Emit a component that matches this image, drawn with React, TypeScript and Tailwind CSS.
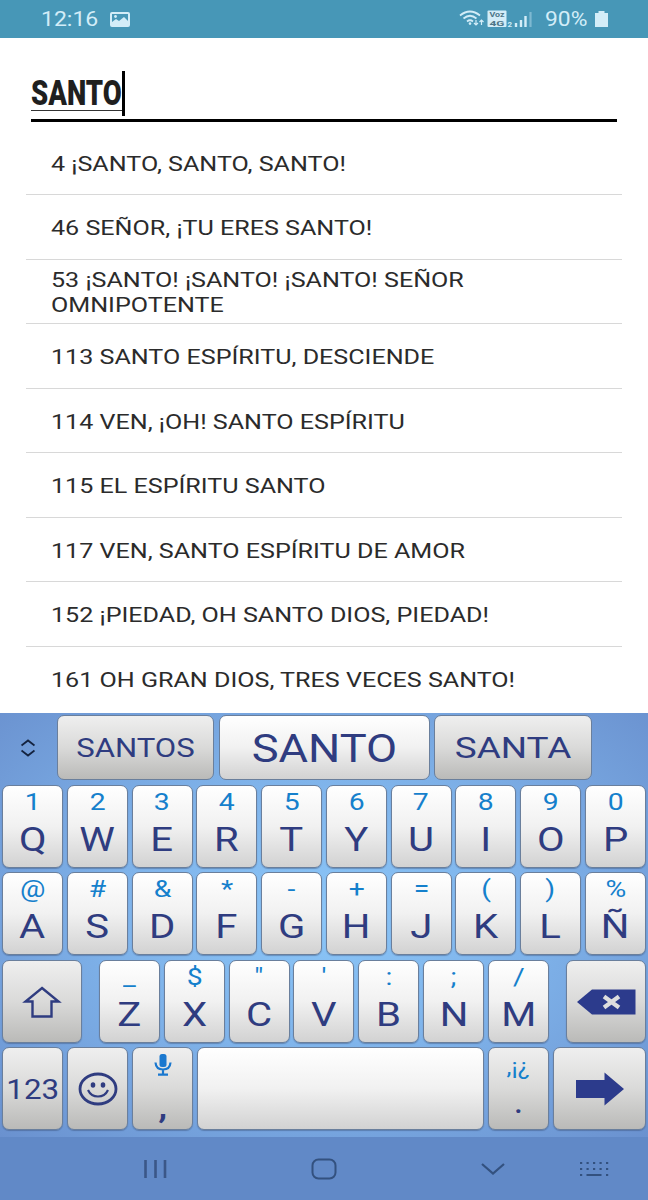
import React from 'react';

const songs = [
  '4 ¡SANTO, SANTO, SANTO!',
  '46 SEÑOR, ¡TU ERES SANTO!',
  '53 ¡SANTO! ¡SANTO! ¡SANTO! SEÑOR OMNIPOTENTE',
  '113 SANTO ESPÍRITU, DESCIENDE',
  '114 VEN, ¡OH! SANTO ESPÍRITU',
  '115 EL ESPÍRITU SANTO',
  '117 VEN, SANTO ESPÍRITU DE AMOR',
  '152 ¡PIEDAD, OH SANTO DIOS, PIEDAD!',
  '161 OH GRAN DIOS, TRES VECES SANTO!',
];

const topRow = ['1Q', '2W', '3E', '4R', '5T', '6Y', '7U', '8I', '9O', '0P'];
const midRow = ['@A', '#S', '&D', '*F', '-G', '+H', '=J', '(K', ')L', '%Ñ'];
const lowRow = ['_Z', '$X', '"C', "'V", ':B', ';N', '/M'];

const keyBase = 'shrink-0 h-[83px] rounded-[7px] border border-[#6a7f9c] shadow-[0_1px_1px_rgba(50,70,110,0.4)]';
const lightKey = 'bg-linear-to-b from-white via-[#f1f1f1] to-[#d2d2d2]';
const grayKey = 'bg-linear-to-b from-[#efefef] via-[#dadad9] to-[#babab8]';

const LetterKey: React.FC<{ value: string }> = ({ value }) => (
  <button className={`${keyBase} ${lightKey} flex w-[61px] flex-col items-center`}>
    <span className="block h-[33px] scale-x-[1.18] text-[24px] leading-[33px] text-[#1580cc]">{value[0]}</span>
    <span className="block h-[40px] scale-x-[1.18] text-[34px] leading-[40px] text-[#2f3c80]">{value[1]}</span>
  </button>
);

const StatusBar = () => (
  <header className="flex h-[38px] items-center bg-[#4797b7] pl-[41px] text-[#d3edf8]">
    <span className="block w-[69px] origin-left scale-x-[1.18] pt-[2px] text-[19.5px] leading-[38px]">12:16</span>
    <svg className="h-[15px] w-[20px]" viewBox="0 0 20 15">
      <rect x="1" y="1" width="18" height="13" rx="1" fill="none" stroke="currentColor" strokeWidth="2" />
      <path d="M2 13V10L6 7L9 9L14 5L18 9V13Z" fill="currentColor" />
      <circle cx="5.5" cy="4.5" r="1.4" fill="currentColor" />
    </svg>
    <svg className="ml-[329px] h-[18px] w-[74px]" viewBox="0 0 74 18" fill="none" stroke="currentColor">
      <path d="M1 5.5Q11 -2.5 21 5.5M4.5 8.5Q11 3 17.5 8.5M8 11.5Q11 9 14 11.5" strokeWidth="1.7" />
      <circle cx="11" cy="13.6" r="1.3" fill="currentColor" stroke="none" />
      <path d="M17 10v5m-2-2 2 2 2-2M22.5 15v-5m-2 2 2-2 2 2" strokeWidth="1.2" />
      <rect x="28.5" y="0.5" width="19" height="16.5" rx="1" fill="currentColor" stroke="none" />
      <text x="30.5" y="6.6" fontSize="6.5" fontWeight="700" fill="#4c7688" stroke="none" textLength="15" lengthAdjust="spacingAndGlyphs">Voz</text>
      <text x="30.5" y="16" fontSize="8" fontWeight="700" fill="#4c7688" stroke="none" textLength="15" lengthAdjust="spacingAndGlyphs">4G</text>
      <text x="48.5" y="17" fontSize="8" fontWeight="700" fill="currentColor" stroke="none">2</text>
      <path d="M57 17v-4M62 17v-7M66.5 17V6" strokeWidth="2.4" />
      <path d="M71.5 17V2" strokeWidth="2.2" opacity="0.4" />
    </svg>
    <span className="ml-[12px] block w-[50px] origin-left scale-x-[1.17] pt-[2px] text-[19.5px] leading-[38px]">90%</span>
    <svg className="h-[16px] w-[13px]" viewBox="0 0 13 16" fill="currentColor">
      <path d="M3.5 0H9.5V2H13V16H0V2H3.5Z" />
    </svg>
  </header>
);

const SearchField = () => (
  <div className="mx-[31px] flex h-[84px] items-end border-b-[3px] border-black">
    <div className="mb-[8px] h-[32px] w-[91px] border-b border-[#333]">
      <span className="block origin-left scale-x-[0.785] text-[35px] leading-[30px] font-black text-[#1f1f1f]">SANTO</span>
    </div>
    <div className="mb-[3px] h-[45px] w-[3px] bg-black" />
  </div>
);

const SongList = () => (
  <ul className="h-[591px] overflow-hidden px-[26px] pt-[8.5px]">
    {songs.map(song => (
      <li key={song} className="flex h-[64.5px] items-center border-b border-[#d8d8d8] pt-[3px] pl-[24.5px] last:border-b-0">
        <span className="block w-[390px] shrink-0 origin-left scale-x-[1.195] text-[21px] leading-[24.5px] text-[#2b2b2b]">
          {song}
        </span>
      </li>
    ))}
  </ul>
);

const Suggestions = () => (
  <div className="flex h-[65px] items-center text-[#2f3c80]">
    <div className="flex w-[55px] justify-center">
      <svg className="h-[18px] w-[14px]" viewBox="0 0 14 18" fill="none" stroke="#14233f" strokeWidth="1.8">
        <path d="M0.5 6.5 7 1.500 13.5 6.5M0.5 11.500 7 16.500 13.5 11.500" />
      </svg>
    </div>
    <button className={`${grayKey} ml-[2px] h-[65px] w-[157px] rounded-[7px] border border-[#6a7f9c]`}>
      <span className="block scale-x-[1.22] pt-[1px] text-[25.5px]">SANTOS</span>
    </button>
    <button className={`${lightKey} ml-[5px] h-[65px] w-[211px] rounded-[7px] border border-[#6a7f9c]`}>
      <span className="block scale-x-[1.19] pt-[2px] text-[38px] leading-none">SANTO</span>
    </button>
    <button className={`${grayKey} ml-[4px] h-[65px] w-[158px] rounded-[7px] border border-[#6a7f9c]`}>
      <span className="block scale-x-[1.23] pt-[1px] text-[30px] leading-none">SANTA</span>
    </button>
  </div>
);

const Keyboard = () => (
  <section className="h-[424px] bg-[radial-gradient(ellipse_at_50%_48%,#8bc6f8_0%,#7fb3ea_45%,#6a91cf_100%)] pt-[2px]">
    <Suggestions />
    <div className="mt-[5px] flex justify-between px-[2px]">
      {topRow.map(k => <LetterKey key={k} value={k} />)}
    </div>
    <div className="mt-[4.4px] flex justify-between px-[2px]">
      {midRow.map(k => <LetterKey key={k} value={k} />)}
    </div>
    <div className="mt-[4.4px] flex justify-between px-[2px]">
      <button className={`${keyBase} ${grayKey} flex w-[80px] items-center justify-center`}>
        <svg className="mt-[2px] h-[32px] w-[40px]" viewBox="0 0 40 32" fill="none" stroke="#2f3c80" strokeWidth="2.4">
          <path d="M20 2 36.5 15.500H29.5V30.500H10.5V15.500H3.5Z" />
        </svg>
      </button>
      <div className="flex w-[450px] justify-between">
        {lowRow.map(k => <LetterKey key={k} value={k} />)}
      </div>
      <button className={`${keyBase} ${grayKey} flex w-[80px] items-center justify-center`}>
        <svg className="mt-[1px] h-[26px] w-[59px]" viewBox="0 0 59 26">
          <path d="M0 13 15 0.500H58.5V25.500H15Z" fill="#2c3b8c" />
          <path d="M27 7.500 42 18.500M42 7.500 27 18.500" stroke="#dedede" strokeWidth="4.2" />
        </svg>
      </button>
    </div>
    <div className="mt-[4.4px] flex justify-between px-[2px] text-[#2f3c80]">
      <button className={`${keyBase} ${grayKey} flex w-[61px] items-center justify-center`}>
        <span className="block scale-x-[1.16] pt-[3px] text-[27px]">123</span>
      </button>
      <button className={`${keyBase} ${grayKey} flex w-[61px] items-center justify-center`}>
        <svg className="mt-[1px] h-[34px] w-[40px]" viewBox="0 0 40 34" fill="none" stroke="#2f3c80">
          <ellipse cx="20" cy="17" rx="18" ry="15" strokeWidth="2.8" />
          <ellipse cx="15" cy="13" rx="2.3" ry="2.7" fill="#2f3c80" stroke="none" />
          <ellipse cx="25" cy="13" rx="2.3" ry="2.7" fill="#2f3c80" stroke="none" />
          <path d="M10 18Q13 24.500 20 24.500T30 18" strokeWidth="2.2" />
        </svg>
      </button>
      <button className={`${keyBase} ${grayKey} flex w-[61px] flex-col items-center pt-[6px]`}>
        <svg className="h-[22px] w-[18px]" viewBox="0 0 18 22" fill="none" stroke="#1a78cf">
          <rect x="5.5" y="0" width="7" height="13" rx="2.5" fill="#1a78cf" stroke="none" />
          <path d="M1.5 8.500Q2 15.500 9 15.500T16.5 8.500M9 15.500V20M4 20.700H14" strokeWidth="2.2" />
        </svg>
        <span className="mt-[12px] block scale-x-[1.18] text-[34px] leading-[36px] font-medium">,</span>
      </button>
      <button className={`${keyBase} ${lightKey} w-[287px]`} />
      <button className={`${keyBase} ${grayKey} flex w-[61px] flex-col items-center`}>
        <span className="block h-[42px] scale-x-[1.14] text-[22px] leading-[37px] text-[#1580cc]">,¡¿</span>
        <span className="block text-[30px] leading-[26px] font-medium">.</span>
      </button>
      <button className={`${keyBase} ${grayKey} flex w-[93px] items-center justify-center`}>
        <svg className="h-[34px] w-[50px]" viewBox="0 0 50 34">
          <path d="M1 8H29.5V0.500L49 17 29.5 33.500V26H1Z" fill="#2c3b8c" />
        </svg>
      </button>
    </div>
  </section>
);

const NavBar = () => (
  <nav className="flex h-[63px] items-center bg-[#6189c7] pt-[1px] pl-[143px]">
    <svg className="h-[20px] w-[25px]" viewBox="0 0 25 20" stroke="#3b5788" strokeWidth="2.6">
      <path d="M2.5 1V19M12.5 1V19M22 1V19" />
    </svg>
    <svg className="ml-[143px] h-[22px] w-[26px]" viewBox="0 0 26 22" fill="none" stroke="#33517f" strokeWidth="2">
      <rect x="1.5" y="1.5" width="23" height="19" rx="6" />
    </svg>
    <svg className="ml-[143px] h-[14px] w-[26px]" viewBox="0 0 26 14" fill="none" stroke="#33517f" strokeWidth="2.2">
      <path d="M2 2 13 11.500 24 2" />
    </svg>
    <svg className="ml-[73px] h-[16px] w-[30px]" viewBox="0 0 30 16" fill="#33517f">
      {[1, 7, 13].map(y => [1, 7.5, 14, 20.5, 27].map((x, i) => (
        y < 13 || i === 0 || i === 4 ? <rect key={`${x}-${y}`} x={x} y={y} width="2.2" height="2" /> : null
      )))}
      <rect x="7.5" y="13" width="15" height="2" />
    </svg>
  </nav>
);

const App = () => {
  return (
    <div className="h-[1200px] w-[648px] overflow-hidden bg-white font-['Roboto',sans-serif]">
      <StatusBar />
      <SearchField />
      <SongList />
      <Keyboard />
      <NavBar />
    </div>
  );
};

export default App;
